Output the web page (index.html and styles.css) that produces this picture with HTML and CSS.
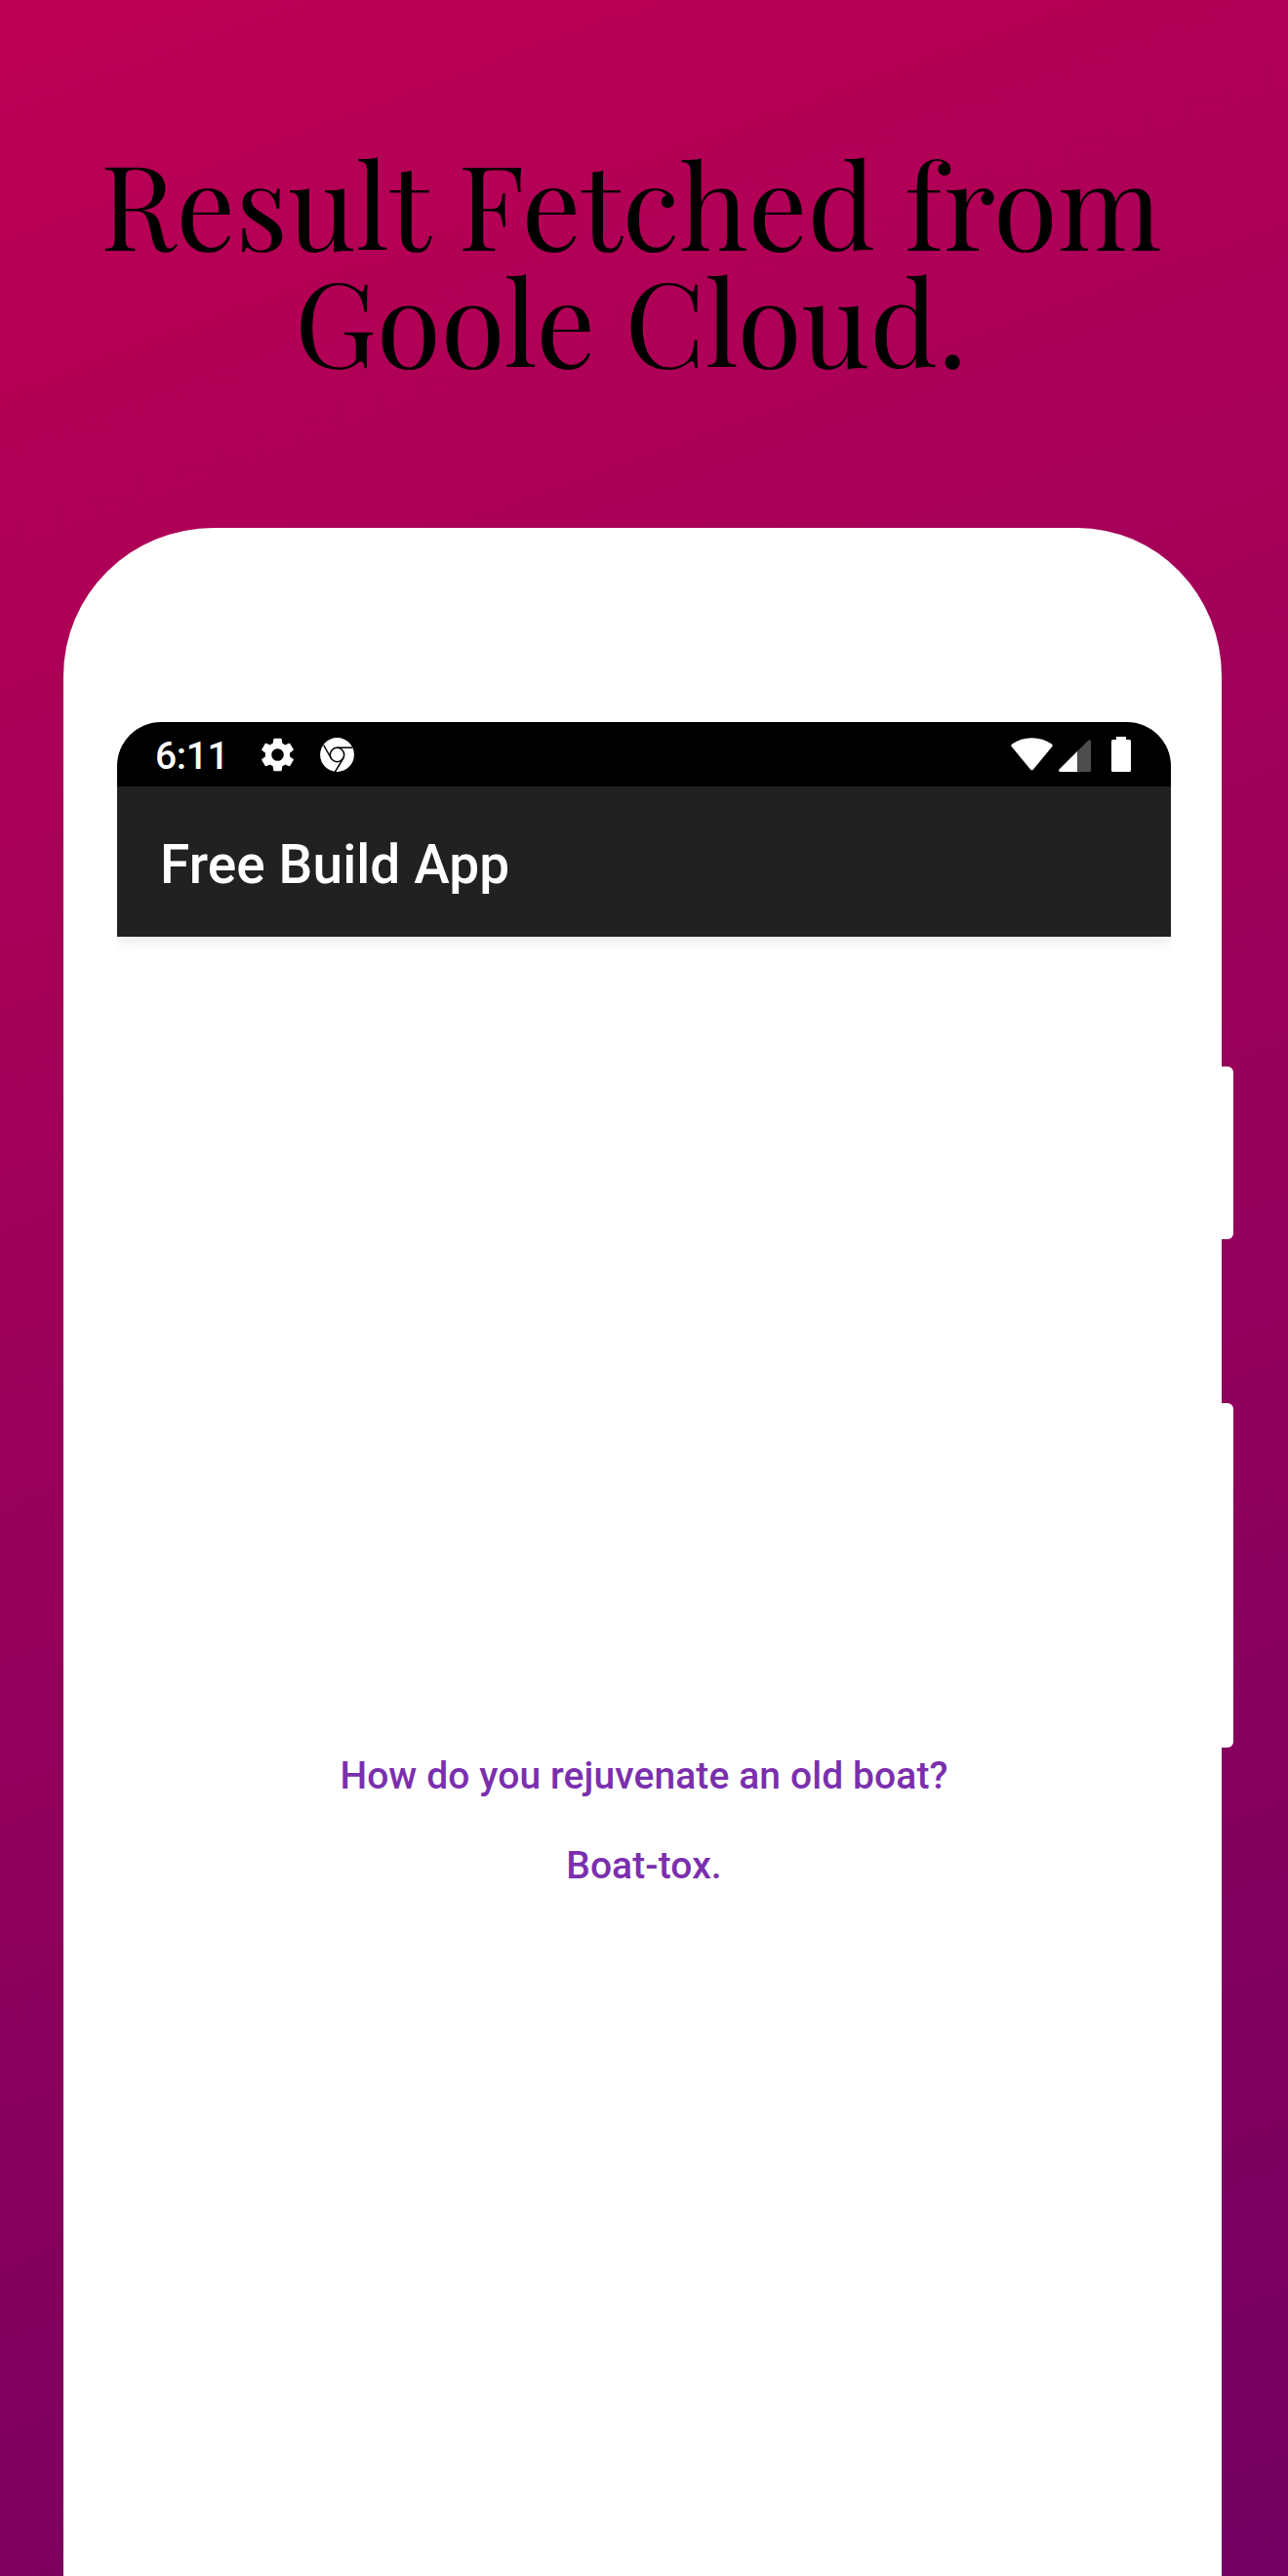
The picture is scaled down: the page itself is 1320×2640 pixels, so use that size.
FILE: index.html
```html
<!DOCTYPE html>
<html lang="en">
<head>
<meta charset="utf-8">
<title>Free Build App</title>
<link rel="stylesheet" href="styles.css">
</head>
<body>
<main class="promo">
  <h1 class="headline"><span class="line">Result Fetched from</span><span class="line">Goole Cloud.</span></h1>
  <section class="phone">
    <div class="key key-power"></div>
    <div class="key key-volume"></div>
    <div class="screen">
      <div class="status">
        <span class="time">6:11</span>
        <svg class="gear" viewBox="2 2 20 20"><path fill="#fff" d="M19.14 12.94c.04-.3.06-.61.06-.94s-.02-.64-.07-.94l2.03-1.58a.49.49 0 0 0 .12-.61l-1.92-3.32a.488.488 0 0 0-.59-.22l-2.39.96c-.5-.38-1.03-.7-1.62-.94l-.36-2.54a.484.484 0 0 0-.48-.41h-3.84c-.24 0-.43.17-.47.41l-.36 2.54c-.59.24-1.13.57-1.62.94l-2.39-.96c-.22-.08-.47 0-.59.22L2.74 8.87c-.12.21-.08.47.12.61l2.03 1.58c-.05.3-.09.63-.09.94s.02.64.07.94l-2.03 1.58a.49.49 0 0 0-.12.61l1.92 3.32c.12.22.37.29.59.22l2.39-.96c.5.38 1.03.7 1.62.94l.36 2.54c.05.24.24.41.48.41h3.84c.24 0 .44-.17.47-.41l.36-2.54c.59-.24 1.13-.56 1.62-.94l2.39.96c.22.08.47 0 .59-.22l1.92-3.32c.12-.22.07-.47-.12-.61zM12 15.6a3.6 3.6 0 1 1 0-7.2 3.6 3.6 0 0 1 0 7.2z"/></svg>
        <svg class="chrome" viewBox="0 0 35 35"><circle cx="17.5" cy="17.5" r="17.4" fill="#fff"/><g fill="none" stroke="#000" stroke-width="1.5"><circle cx="17.5" cy="17.5" r="7.2"/><path d="M17.5 10.3H33M11.2 21L3.6 7.5M23.8 21L15.3 35.2"/></g></svg>
        <span class="spacer"></span>
        <svg class="wifi" viewBox="0 0 43 34"><path fill="#fff" d="M.8 9.3Q-.4 7.7 1.2 6.4C13.5-1.8 29.5-1.8 41.8 6.4Q43.4 7.7 42.2 9.3L23 32.5Q21.5 34.2 20 32.5Z"/></svg>
        <svg class="signal" viewBox="0 0 33 33"><path fill="#4d4d4d" d="M19 12L30 1Q33-1 33 2V31.500Q33 33 31.500 33H19Z"/><path fill="#fff" d="M19 12V33H1.500Q-.8 32.500.5 30.500Z"/></svg>
        <svg class="battery" viewBox="0 0 20 36"><path fill="#fff" d="M5 0H15V3H18.500Q20 3 20 4.500V34.500Q20 36 18.500 36H1.500Q0 36 0 34.500V4.500Q0 3 1.500 3H5Z"/></svg>
      </div>
      <header class="appbar">Free Build App</header>
      <div class="joke">
        <p>How do you rejuvenate an old boat?</p>
        <p>Boat-tox.</p>
      </div>
    </div>
  </section>
</main>
</body>
</html>
```
FILE: styles.css
```css
* { box-sizing: border-box; }
body { margin: 0; }
.promo {
  height: 2640px;
  overflow: hidden;
  padding: 147px 68px 0 65px;
  background: linear-gradient(160deg, #bd0054 0%, #720061 100%);
}
.headline {
  display: flex;
  flex-direction: column;
  align-items: center;
  height: 394px;
  margin: 0;
  padding-right: 24px;
  font: 400 120px/120px "Playfair Display", "Liberation Serif", serif;
  color: #000;
}
.line { white-space: nowrap; }
.phone {
  position: relative;
  height: 2200px;
  padding: 199px 52px 0 55px;
  border-radius: 154px 148px 0 0 / 152px 152px 0 0;
  background: #fff;
}
.key {
  position: absolute;
  left: 100%;
  width: 12px;
  border-radius: 0 6px 6px 0;
  background: #fff;
}
.key-power { top: 552px; height: 177px; }
.key-volume { top: 897px; height: 353px; }
.screen { font-family: Roboto, sans-serif; font-weight: 500; }
.status {
  display: flex;
  align-items: center;
  height: 66px;
  padding: 0 41px 0 39px;
  border-radius: 45px 45px 0 0;
  background: #000;
  color: #fff;
}
.time { width: 108px; font-size: 39px; line-height: 66px; letter-spacing: -.4px; padding-top: 3px; }
.gear { width: 35px; height: 35px; }
.chrome { width: 35px; height: 35px; margin-left: 26px; }
.spacer { flex: 1; }
.wifi { width: 43px; height: 34px; margin-right: 6px; }
.signal { width: 33px; height: 33px; margin: 2px 21px 0 0; }
.battery { width: 20px; height: 36px; }
.appbar {
  height: 154px;
  padding-left: 44px;
  background: #212121;
  box-shadow: 0 4px 14px rgba(0, 0, 0, .1);
  clip-path: inset(0 0 -20px 0);
  color: #fff;
  font-size: 55px;
  line-height: 160px;
  letter-spacing: .1px;
}
.joke {
  padding-top: 814px;
  color: #7b2fae;
  font-size: 39px;
  line-height: 92px;
  letter-spacing: .1px;
  text-align: center;
}
.joke p { margin: 0; }
```
